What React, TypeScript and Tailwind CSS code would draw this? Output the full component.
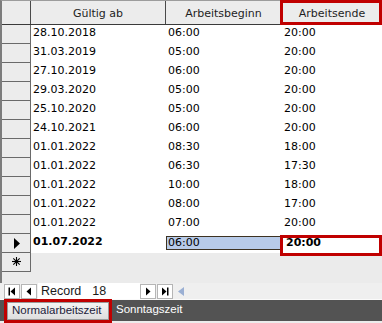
import React from "react";

const rows: [string, string, string][] = [
  ["28.10.2018", "06:00", "20:00"],
  ["31.03.2019", "05:00", "20:00"],
  ["27.10.2019", "06:00", "20:00"],
  ["29.03.2020", "05:00", "20:00"],
  ["25.10.2020", "05:00", "20:00"],
  ["24.10.2021", "06:00", "20:00"],
  ["01.01.2022", "08:30", "18:00"],
  ["01.01.2022", "06:30", "17:30"],
  ["01.01.2022", "10:00", "18:00"],
  ["01.01.2022", "08:00", "17:00"],
  ["01.01.2022", "07:00", "20:00"],
];

function NavBtn({ kind }: { kind: "first" | "prev" | "next" | "last" }) {
  return (
    <div className="w-[16px] h-[15px] bg-white border border-[#b5b5b5] flex items-center justify-center">
      <svg width="8" height="9" viewBox="0 0 8 9">
        {kind === "first" && (
          <>
            <rect x="0.5" y="0.5" width="1.5" height="8" fill="#000" />
            <polygon points="7,0.5 2.5,4.5 7,8.5" fill="#000" />
          </>
        )}
        {kind === "prev" && <polygon points="6,0.5 1.5,4.5 6,8.5" fill="#000" />}
        {kind === "next" && <polygon points="2,0.5 6.5,4.5 2,8.5" fill="#000" />}
        {kind === "last" && (
          <>
            <polygon points="1,0.5 5.5,4.5 1,8.5" fill="#000" />
            <rect x="6" y="0.5" width="1.5" height="8" fill="#000" />
          </>
        )}
      </svg>
    </div>
  );
}

export default function App() {
  return (
    <div className="w-[382px] h-[323px] bg-[#ebebeb] flex flex-col overflow-hidden font-['DejaVu_Sans',sans-serif] text-[11px] text-black">
      {/* Datasheet */}
      <div className="h-[283px] flex flex-col border-l-2 border-l-[#7c7c7c] border-t border-t-[#9c9c9c] bg-[#ebebeb]">
        {/* Header */}
        <div className="relative flex h-[24px] border-b border-b-[#3a3a3a] bg-[#ececec] text-[#1e1e1e]">
          <div className="w-[29px] border-r border-r-[#4a4a4a]" />
          <div className="w-[135px] border-r border-r-[#4a4a4a] flex items-center justify-center pt-[4px]">Gültig ab</div>
          <div className="w-[116px] border-r border-r-[#4a4a4a] flex items-center justify-center pt-[4px]">Arbeitsbeginn</div>
          <div className="flex-1 flex items-center justify-center pt-[4px]">Arbeitsende</div>
          <div className="absolute left-[278px] top-[-1px] right-0 h-[25px] border-[3px] border-[#c00000]" />
        </div>

        {/* Rows */}
        {rows.map((r, i) => (
          <div key={i} className="flex h-[19px]">
            <div className="w-[29px] border-r border-b border-[#6a6a6a] bg-[#ececec]" />
            <div className="w-[135px] bg-white flex items-center pl-[2px] pb-[2px]">{r[0]}</div>
            <div className="w-[116px] bg-white flex items-center pl-[2px] pb-[2px]">{r[1]}</div>
            <div className="flex-1 bg-white flex items-center pl-[2px] pb-[2px]">{r[2]}</div>
          </div>
        ))}

        {/* Current row */}
        <div className="relative flex h-[19px]">
          <div className="w-[29px] border-r border-b border-[#6a6a6a] bg-[#ececec] flex items-center pl-[12px]">
            <svg width="6" height="11" viewBox="0 0 6 11">
              <polygon points="0,0 6,5.5 0,11" fill="#000" />
            </svg>
          </div>
          <div className="w-[135px] bg-white flex items-center pl-[2px] pb-[2px] font-bold">01.07.2022</div>
          <div className="w-[116px] bg-white pt-[2px]">
            <div className="h-[14px] border border-[#3d3222] bg-[#b8cbe9] flex items-center pl-[1px]">06:00</div>
          </div>
          <div className="flex-1 bg-white" />
          <div className="absolute left-[278px] top-[1px] right-0 h-[21px] border-[3px] border-[#c00000] bg-white z-10 flex items-center pl-[3px] pb-[4px] font-bold">
            20:00
          </div>
        </div>

        {/* New row */}
        <div className="flex h-[19px]">
          <div className="w-[29px] border-r border-b border-[#6a6a6a] bg-[#ececec] flex items-center pl-[10px] pb-[1px]">
            <svg width="9" height="9" viewBox="0 0 9 9" stroke="#000" strokeWidth="1.1">
              <line x1="4.5" y1="0" x2="4.5" y2="9" />
              <line x1="0" y1="4.5" x2="9" y2="4.5" />
              <line x1="1.3" y1="1.3" x2="7.7" y2="7.7" />
              <line x1="7.7" y1="1.3" x2="1.3" y2="7.7" />
            </svg>
          </div>
          <div className="flex-1" />
        </div>
      </div>

      {/* Navigation bar */}
      <div className="h-[16px] flex items-center bg-[#efefef] pl-[4px] font-['Liberation_Sans',sans-serif] text-[12.5px]">
        <NavBtn kind="first" />
        <div className="w-[1px]" />
        <NavBtn kind="prev" />
        <div className="w-[102px] h-[16px] bg-white flex items-center ml-[1px]">
          <span className="ml-[3px] text-[#1a1a1a]">Record</span>
          <span className="ml-[11px] text-[#1a1a1a]">18</span>
        </div>
        <NavBtn kind="next" />
        <div className="w-[1px]" />
        <NavBtn kind="last" />
        <div className="ml-[5px]">
          <svg width="6" height="9" viewBox="0 0 6 9">
            <polygon points="6,0 0,4.5 6,9" fill="#9aafd3" />
          </svg>
        </div>
      </div>

      {/* Tabs */}
      <div className="relative h-[24px] border-t border-t-[#fafafa] border-b-2 border-b-[#ececec] bg-[#535353] flex items-center font-['Liberation_Sans',sans-serif] text-[11.5px]">
        <div className="absolute left-[4px] top-[-1px] w-[108px] h-[24px] border-[3px] border-[#c00000] bg-[#c00000]">
          <div className="w-full h-full bg-gradient-to-b from-[#f4f4f4] to-[#dedede] border border-[#9a9a9a] flex items-center pl-[4px] pb-[1px] text-[#1c1c3a]">
            Normalarbeitszeit
          </div>
        </div>
        <div className="ml-[116px] pb-[1px] text-white">Sonntagszeit</div>
      </div>
    </div>
  );
}
